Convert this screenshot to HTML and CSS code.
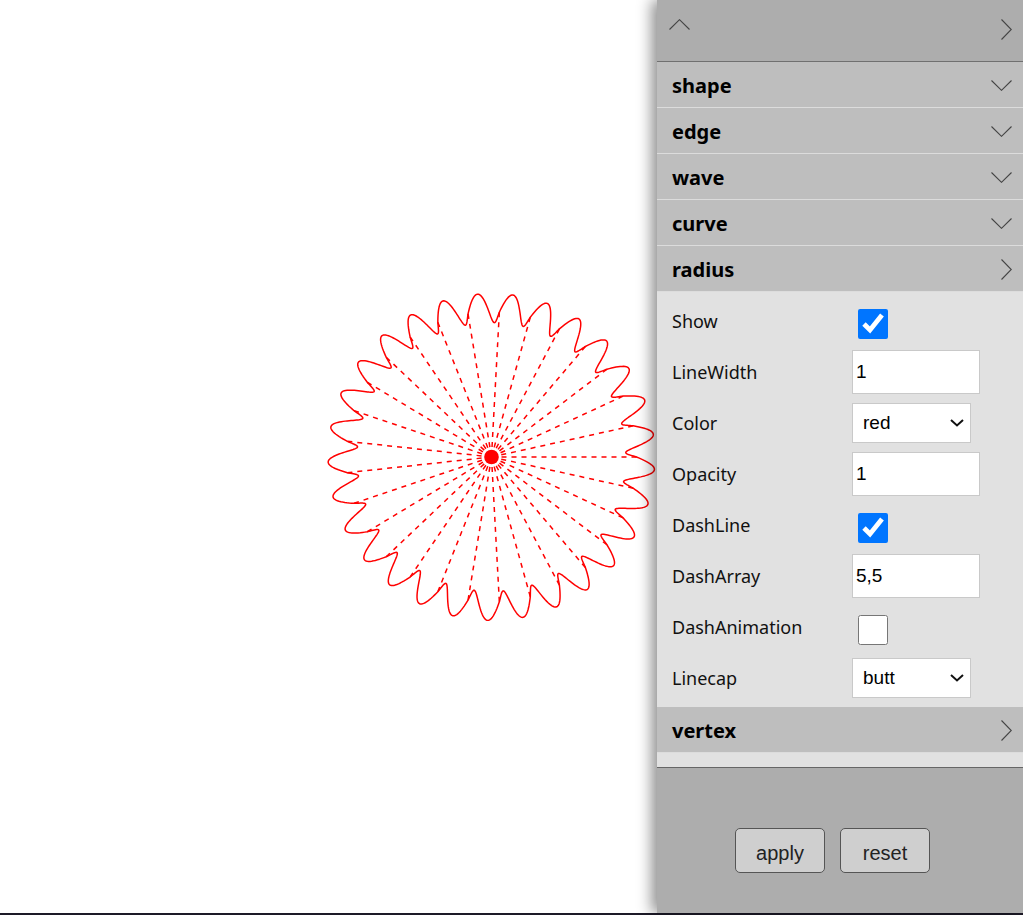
FILE: index.html
```html
<!DOCTYPE html>
<html>
<head>
<meta charset="utf-8">
<title>Shape editor</title>
<link rel="stylesheet" href="styles.css">
</head>
<body>
<div class="stage">
  <svg class="flower" width="1023" height="913" viewBox="0 0 1023 913">
    <g class="spokes" id="spokes"></g>
    <path id="outline" class="outline" d=""></path>
    <circle class="hub" cx="491.5" cy="457" r="7.3"></circle>
  </svg>

  <aside class="panel">
    <div class="topbar">
      <svg class="ico ico-up" width="21" height="11" viewBox="0 0 21 11"><polyline points="0.5,10.5 10.5,0.7 20.5,10.5"/></svg>
      <svg class="ico ico-right" width="11" height="21" viewBox="0 0 11 21"><polyline points="0.5,0.5 10.3,10.5 0.5,20.5"/></svg>
    </div>

    <div class="list">
      <div class="sec-head"><span>shape</span><svg class="ico" width="21" height="11" viewBox="0 0 21 11"><polyline points="0.5,0.5 10.5,10.3 20.5,0.5"/></svg></div>
      <div class="sec-head"><span>edge</span><svg class="ico" width="21" height="11" viewBox="0 0 21 11"><polyline points="0.5,0.5 10.5,10.3 20.5,0.5"/></svg></div>
      <div class="sec-head"><span>wave</span><svg class="ico" width="21" height="11" viewBox="0 0 21 11"><polyline points="0.5,0.5 10.5,10.3 20.5,0.5"/></svg></div>
      <div class="sec-head"><span>curve</span><svg class="ico" width="21" height="11" viewBox="0 0 21 11"><polyline points="0.5,0.5 10.5,10.3 20.5,0.5"/></svg></div>
      <div class="sec-head"><span>radius</span><svg class="ico" width="11" height="21" viewBox="0 0 11 21"><polyline points="0.5,0.5 10.3,10.5 0.5,20.5"/></svg></div>

      <div class="sec-body">
        <div class="row"><label class="lbl">Show</label><input class="chk" type="checkbox" checked></div>
        <div class="row"><label class="lbl">LineWidth</label><input class="txt" type="text" value="1"></div>
        <div class="row"><label class="lbl">Color</label>
          <span class="sel-wrap"><select class="sel"><option>red</option></select><svg class="sel-arrow" width="14" height="8" viewBox="0 0 14 8"><polyline points="1,1 7,6.5 13,1"/></svg></span>
        </div>
        <div class="row"><label class="lbl">Opacity</label><input class="txt" type="text" value="1"></div>
        <div class="row"><label class="lbl">DashLine</label><input class="chk" type="checkbox" checked></div>
        <div class="row"><label class="lbl">DashArray</label><input class="txt" type="text" value="5,5"></div>
        <div class="row"><label class="lbl">DashAnimation</label><input class="chk" type="checkbox"></div>
        <div class="row"><label class="lbl">Linecap</label>
          <span class="sel-wrap"><select class="sel"><option>butt</option></select><svg class="sel-arrow" width="14" height="8" viewBox="0 0 14 8"><polyline points="1,1 7,6.5 13,1"/></svg></span>
        </div>
      </div>

      <div class="sec-head"><span>vertex</span><svg class="ico" width="11" height="21" viewBox="0 0 11 21"><polyline points="0.5,0.5 10.3,10.5 0.5,20.5"/></svg></div>
    </div>

    <div class="footer">
      <button class="btn" type="button">apply</button>
      <button class="btn" type="button">reset</button>
    </div>
  </aside>
</div>
<div class="baseline"></div>
<script src="script.js"></script>
</body>
</html>
```

FILE: styles.css
```css
html, body {
  margin: 0;
  padding: 0;
}
body {
  width: 1023px;
  height: 915px;
  overflow: hidden;
  background: #ffffff;
  font-family: "Noto Sans", "Open Sans", sans-serif;
  color: #000;
}
.stage {
  position: relative;
  height: 913px;
}
.flower {
  display: block;
}
.outline {
  fill: none;
  stroke: #ff0000;
  stroke-width: 1.5;
  stroke-linejoin: round;
}
.spokes line {
  stroke: #ff0000;
  stroke-width: 1.5;
  stroke-dasharray: 5 5;
}
.hub {
  fill: #ff0000;
}
.baseline {
  height: 2px;
  background: #1d1a28;
}

.panel {
  position: absolute;
  top: 0;
  right: 0;
  width: 366px;
  height: 913px;
  display: flex;
  flex-direction: column;
  background: #adadad;
  box-shadow: -5px 0 14px rgba(0, 0, 0, 0.45);
}
.ico polyline {
  fill: none;
  stroke: #444;
  stroke-width: 1.1;
}
.topbar {
  height: 61px;
  flex: none;
  border-bottom: 1px solid #707070;
  display: flex;
  justify-content: space-between;
  align-items: flex-start;
  padding: 0 11px 0 12px;
}
.topbar .ico {
  margin-top: 19px;
}
.list {
  height: 705px;
  flex: none;
  background: #e1e1e1;
}
.sec-head {
  height: 45px;
  border-bottom: 1px solid #dcdcdc;
  background: #bebebe;
  display: flex;
  align-items: center;
  justify-content: space-between;
  padding: 0 11px 0 15px;
  font-size: 20px;
  font-weight: bold;
}
.sec-head span {
  margin-top: 2px;
}
.sec-head .ico {
  margin-top: 2px;
}
.sec-body {
  padding: 3px 0 4px 15px;
  background: #e1e1e1;
}
.row {
  height: 51px;
  display: flex;
  align-items: center;
}
.lbl {
  width: 180px;
  flex: none;
  font-size: 18px;
  color: #111;
}
.txt {
  box-sizing: border-box;
  width: 128px;
  height: 44px;
  border: 1px solid #c9c9c9;
  background: #fff;
  padding: 0 3px;
  margin: 0;
  font-family: "Liberation Sans", Arial, sans-serif;
  font-size: 19px;
  color: #000;
  outline: none;
}
.chk {
  width: 30px;
  height: 30px;
  margin: 7px 0 0 6px;
  accent-color: #0075ff;
}
.sel-wrap {
  position: relative;
  display: inline-block;
  width: 119px;
  height: 40px;
}
.sel {
  -webkit-appearance: none;
  appearance: none;
  box-sizing: border-box;
  width: 119px;
  height: 40px;
  border: 1px solid #c9c9c9;
  border-radius: 0;
  background: #fff;
  padding: 0 0 0 10px;
  margin: 0;
  font-family: "Liberation Sans", Arial, sans-serif;
  font-size: 19px;
  color: #000;
  outline: none;
}
.sel-arrow {
  position: absolute;
  left: 98px;
  top: 16px;
  pointer-events: none;
}
.sel-arrow polyline {
  fill: none;
  stroke: #111;
  stroke-width: 2;
}
.footer {
  flex: 1;
  border-top: 1px solid #666;
  padding: 60px 0 0 78px;
  display: flex;
  align-items: flex-start;
}
.btn {
  width: 90px;
  height: 45px;
  margin: 0 15px 0 0;
  padding: 6px 0 0;
  background: #cfcfcf;
  border: 1px solid #555;
  border-radius: 5px;
  font-family: "Liberation Sans", Arial, sans-serif;
  font-size: 20px;
  color: #222;
}
```

FILE: script.js
```js
(function () {
  var NS = 'http://www.w3.org/2000/svg';
  var N = 29, cx = 491.5, cy = 457, R = 145, A = 14.5, B = 6.4, C = 1.8, STEPS = 48;
  var spokes = document.getElementById('spokes');
  var outline = document.getElementById('outline');
  var v = [];
  var i, s;
  for (i = 0; i < N; i++) {
    var a = i * 2 * Math.PI / N;
    v.push([cx + R * Math.cos(a), cy + R * Math.sin(a)]);
  }
  var d = '';
  for (i = 0; i < N; i++) {
    var p = v[i], q = v[(i + 1) % N];
    var dx = q[0] - p[0], dy = q[1] - p[1], L = Math.hypot(dx, dy);
    var ux = dx / L, uy = dy / L;
    var nx = uy, ny = -ux;
    for (s = (i === 0 ? 0 : 1); s <= STEPS; s++) {
      var t = s / STEPS;
      var along = L * t + C * (1 - Math.cos(2 * Math.PI * t));
      var w = A * Math.sin(2 * Math.PI * t) + B * Math.sin(Math.PI * t);
      var x = p[0] + ux * along + nx * w, y = p[1] + uy * along + ny * w;
      d += (d ? 'L' : 'M') + x.toFixed(2) + ' ' + y.toFixed(2);
    }
    var ln = document.createElementNS(NS, 'line');
    ln.setAttribute('x1', cx);
    ln.setAttribute('y1', cy);
    ln.setAttribute('x2', p[0].toFixed(2));
    ln.setAttribute('y2', p[1].toFixed(2));
    spokes.appendChild(ln);
  }
  outline.setAttribute('d', d + 'Z');
})();
```
